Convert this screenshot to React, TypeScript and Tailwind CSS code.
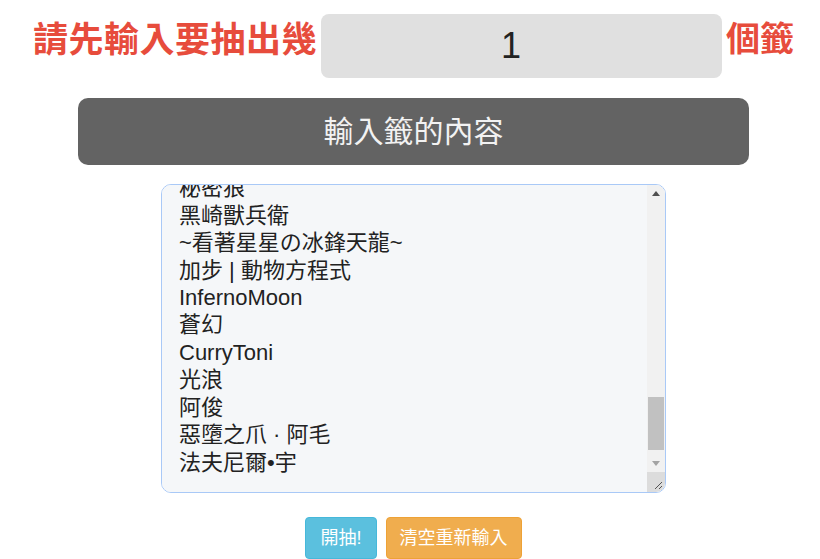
import { useEffect, useRef } from 'react';

const NAMES = [
  '小熊貓',
  '阿明',
  'SkyWalker',
  '雷霆戰神',
  '夜貓子',
  'Lucky7',
  '秘密狼',
  '黑崎獸兵衛',
  '~看著星星の冰鋒天龍~',
  '加步 | 動物方程式',
  'InfernoMoon',
  '蒼幻',
  'CurryToni',
  '光浪',
  '阿俊',
  '惡墮之爪 · 阿毛',
  '法夫尼爾•宇',
];

const FONT = '"Liberation Sans", "Noto Sans CJK TC", sans-serif';

// Classic scrollbar drawn over the textarea's right edge
function FakeScrollbar() {
  return (
    <div className="pointer-events-none absolute right-[1px] top-[1px] bottom-[1px] w-[18px] flex flex-col rounded-r-[9px] overflow-hidden">
      <div className="flex flex-col flex-1 bg-[#f1f1f1]">
        <div className="h-[17px] flex items-center justify-center">
          <svg width="8" height="5" viewBox="0 0 8 5">
            <polygon points="0,5 8,5 4,0" fill="#505050" />
          </svg>
        </div>
        <div className="flex-1 flex flex-col justify-end px-[1px] pb-[5px]">
          <div className="h-[53px] bg-[#c1c1c1]" />
        </div>
        <div className="h-[17px] flex items-center justify-center">
          <svg width="8" height="5" viewBox="0 0 8 5">
            <polygon points="0,0 8,0 4,5" fill="#a3a3a3" />
          </svg>
        </div>
      </div>
      <div className="h-[20px] bg-[#dcdcdc] flex items-end justify-end pr-[2px] pb-[2px]">
        <svg width="10" height="10" viewBox="0 0 10 10">
          <line x1="9" y1="2" x2="2" y2="9" stroke="#555" strokeWidth="1" />
          <line x1="9" y1="6" x2="6" y2="9" stroke="#555" strokeWidth="1" />
        </svg>
      </div>
    </div>
  );
}

export default function App() {
  const areaRef = useRef<HTMLTextAreaElement>(null);
  const text = NAMES.join('\n');

  useEffect(() => {
    const el = areaRef.current;
    if (!el) return;
    const pos = text.lastIndexOf('\n') + 1;
    el.focus();
    el.setSelectionRange(pos, pos);
    el.scrollTop = el.scrollHeight;
  }, [text]);

  return (
    <div className="w-[820px] h-[559px] overflow-hidden bg-white pl-[7px]" style={{ fontFamily: FONT }}>
      <div className="flex flex-col items-center">
        {/* Header: how many to draw */}
        <div className="flex items-start gap-[4px] pt-[14px]">
          <span className="mt-[8px] text-[35px] tracking-[0.5px] leading-none font-bold text-[#e74c3c]">請先輸入要抽出幾</span>
          <input
            defaultValue="1"
            className="w-[401px] h-[64px] rounded-lg bg-[#e0e0e0] pr-[21px] text-center text-[36px] text-[#222] outline-none"
            style={{ fontFamily: FONT }}
          />
          <span className="mt-[8px] text-[34px] leading-none font-bold text-[#e74c3c]">個籤</span>
        </div>

        {/* Section title */}
        <div className="mt-[20px] w-[671px] h-[67px] rounded-[10px] bg-[#636363] flex items-center justify-center">
          <span className="text-[30px] text-[#f2f2f2]">輸入籤的內容</span>
        </div>

        {/* Names */}
        <div className="relative mt-[19px] w-[505px] h-[309px]">
          <textarea
            ref={areaRef}
            defaultValue={text}
            className="block w-full h-full resize-none rounded-[10px] border border-[#a9c9f7] bg-[#f5f7f9] pl-[17px] pr-[24px] py-[16px] text-[22px] leading-[27.4px] text-[#222] outline-none overflow-y-scroll [scrollbar-width:none]"
            style={{ fontFamily: FONT }}
          />
          <FakeScrollbar />
        </div>

        {/* Actions */}
        <div className="mt-[24px] flex gap-[9px]">
          <button className="h-[42px] px-[14px] rounded border border-[#46b8da] bg-[#5bc0de] text-[18px] text-white">
            開抽!
          </button>
          <button className="h-[42px] px-[13px] rounded border border-[#eea236] bg-[#f0ad4e] text-[18px] text-white">
            清空重新輸入
          </button>
        </div>
      </div>
    </div>
  );
}
